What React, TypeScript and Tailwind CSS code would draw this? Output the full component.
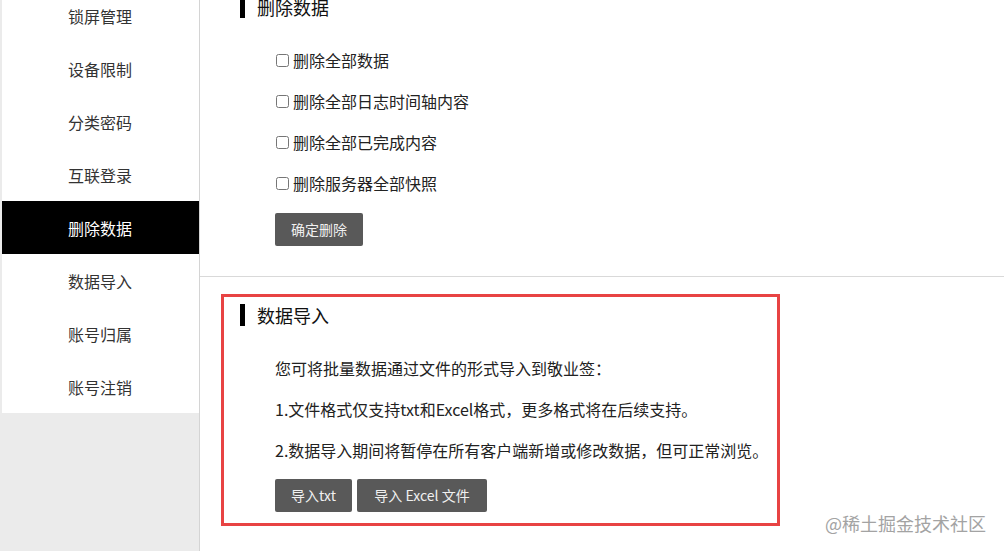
import React from 'react';

const MENU = ['锁屏管理', '设备限制', '分类密码', '互联登录', '删除数据', '数据导入', '账号归属', '账号注销'];
const ACTIVE = '删除数据';

const DELETE_OPTIONS = ['删除全部数据', '删除全部日志时间轴内容', '删除全部已完成内容', '删除服务器全部快照'];

const IMPORT_NOTES = [
  '您可将批量数据通过文件的形式导入到敬业签：',
  '1.文件格式仅支持txt和Excel格式，更多格式将在后续支持。',
  '2.数据导入期间将暂停在所有客户端新增或修改数据，但可正常浏览。',
];

function SectionTitle({ title }: { title: string }) {
  return (
    <div className="flex items-center h-[22px]">
      <div className="w-[5px] h-[22px] bg-black" />
      <span className="ml-[12px] text-[18px] leading-[22px] text-[#111]">{title}</span>
    </div>
  );
}

export default function App() {
  return (
    <div
      className="relative w-[1004px] h-[551px] overflow-hidden flex bg-white"
      style={{ fontFamily: '"Noto Sans CJK SC", "Microsoft YaHei", sans-serif' }}
    >
      {/* Sidebar */}
      <aside className="w-[200px] shrink-0 h-full bg-[#ebebeb] border-r border-[#d4d4d4] pl-[2px]">
        <ul className="-mt-[11px] bg-white">
          {MENU.map(item => {
            const active = item === ACTIVE;
            return (
              <li
                key={item}
                className={`h-[53px] flex items-center pl-[66px] text-[16px] ${active ? 'bg-black text-white' : 'text-[#333]'}`}
              >
                {item}
              </li>
            );
          })}
        </ul>
      </aside>

      {/* Main */}
      <main className="flex-1 h-full">
        {/* 删除数据 */}
        <section className="h-[281px] border-b border-[#d9d9d9] pl-[40px] -mt-[4px]">
          <SectionTitle title="删除数据" />
          <div className="mt-[21.5px] pl-[36px]">
            {DELETE_OPTIONS.map(opt => (
              <label key={opt} className="h-[41px] flex items-center text-[16px] text-[#222]">
                <input type="checkbox" className="w-[13px] h-[13px] m-0 mr-[4px]" />
                {opt}
              </label>
            ))}
          </div>
          <button className="mt-[9.5px] ml-[35px] w-[88px] h-[33px] bg-[#595959] text-[#f0f0f0] text-[14px] rounded-[2px]">
            确定删除
          </button>
        </section>

        {/* 数据导入 */}
        <section className="ml-[21px] mt-[17px] w-[559px] h-[232px] border-[3px] border-[#e84343] pt-[7px] pl-[16px]">
          <SectionTitle title="数据导入" />
          <div className="mt-[21.5px] pl-[35px] text-[16px] leading-[41px] text-[#222]">
            {IMPORT_NOTES.map(line => (
              <p key={line} className="whitespace-nowrap">{line}</p>
            ))}
          </div>
          <div className="mt-[8.5px] pl-[35px] flex gap-[5px]">
            <button className="w-[77px] h-[33px] bg-[#595959] text-[#f0f0f0] text-[14px] rounded-[2px]">导入txt</button>
            <button className="w-[130px] h-[33px] bg-[#595959] text-[#f0f0f0] text-[14px] rounded-[2px]">导入 Excel 文件</button>
          </div>
        </section>
      </main>

      {/* watermark */}
      <div className="absolute left-[825px] top-[511px] text-[18px] leading-[24px] text-[#a3a3a3]">@稀土掘金技术社区</div>
    </div>
  );
}
